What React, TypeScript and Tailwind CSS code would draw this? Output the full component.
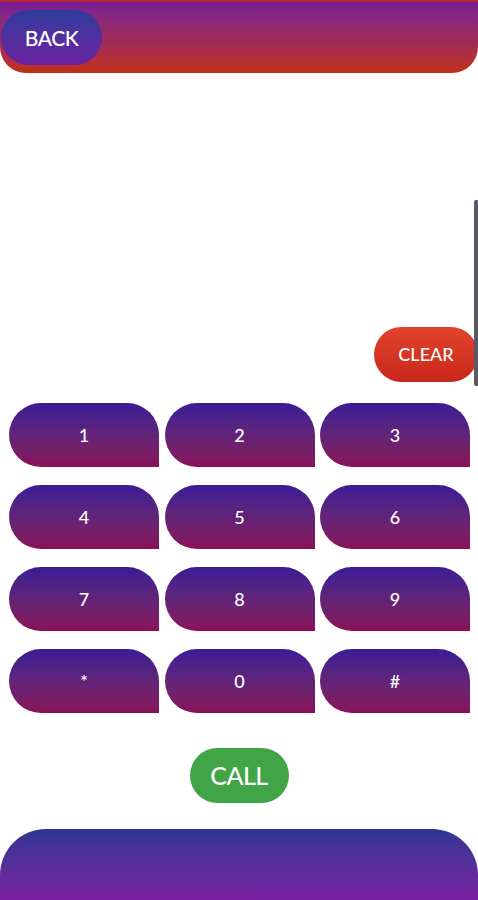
import React from "react";

const keys = ["1", "2", "3", "4", "5", "6", "7", "8", "9", "*", "0", "#"];

export default function App() {
  return (
    <div
      className="relative w-[478px] h-[900px] bg-white overflow-hidden flex flex-col"
      style={{ fontFamily: "Lato, 'Open Sans', sans-serif" }}
    >
      {/* header */}
      <div className="h-[73px] shrink-0 w-full rounded-b-[26px] bg-gradient-to-b from-[#7a1c98] via-[#9c2a5c] to-[#c1300f] border-t-2 border-[#b3262e] pt-[8px] pl-[1px]">
        <button className="w-[101px] h-[55px] rounded-full bg-gradient-to-b from-[#2e3a9c] to-[#6a1fa0] text-white text-[21px] font-medium tracking-[-0.5px] flex items-center justify-center">
          BACK
        </button>
      </div>

      {/* display area */}
      <div className="h-[309px] shrink-0 flex items-end justify-end">
        <button className="w-[104px] h-[55px] rounded-full bg-gradient-to-b from-[#e2432b] to-[#c8261a] text-white text-[18px] font-medium flex items-center justify-center">
          CLEAR
        </button>
      </div>

      {/* keypad */}
      <div className="mt-[21px] pl-[9px] pr-[8px] grid grid-cols-3 gap-x-[5.5px] gap-y-[18px]">
        {keys.map((k) => (
          <button
            key={k}
            className="h-[64px] rounded-[32px] rounded-br-none bg-gradient-to-b from-[#3a1a96] to-[#8a0f58] text-white text-[18px] font-medium flex items-center justify-center"
          >
            {k}
          </button>
        ))}
      </div>

      {/* call */}
      <div className="mt-[35px] flex justify-center">
        <button className="w-[99px] h-[55px] rounded-full bg-[#41a446] text-white text-[25px] font-medium tracking-[-0.5px] flex items-center justify-center">
          CALL
        </button>
      </div>

      {/* footer */}
      <div className="mt-[26px] h-[72px] shrink-0 w-full rounded-t-[46px] bg-gradient-to-b from-[#2e3494] to-[#7a1ea0]" />

      {/* scrollbar */}
      <div className="absolute right-0 top-[200px] w-[4px] h-[186px] rounded-l-[2px] bg-[#5a5a66]" />
    </div>
  );
}
